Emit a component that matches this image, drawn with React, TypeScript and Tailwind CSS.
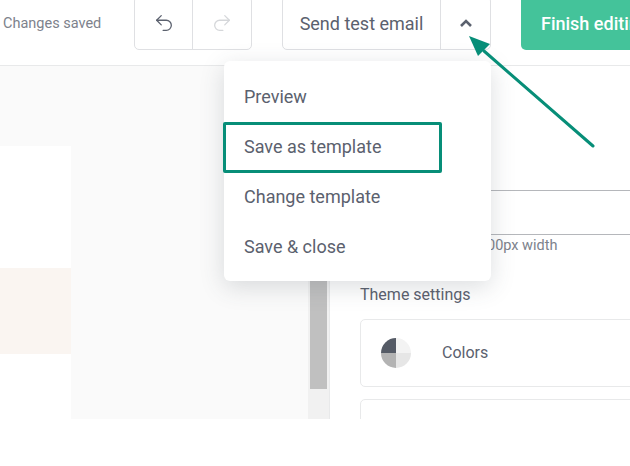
import { Undo2 } from "lucide-react";

const font = "font-['Roboto',sans-serif]";

function MenuItem({ label }: { label: string }) {
  return <div className="h-[50px] pl-5 flex items-center text-[18px] text-[#5b616e]">{label}</div>;
}

export default function App() {
  return (
    <div className={`relative w-[630px] h-[466px] overflow-hidden bg-white ${font}`}>
      {/* Top bar */}
      <header className="h-[66px] border-b border-[#e8e9ea] flex items-start whitespace-nowrap">
        <span className="w-[134px] shrink-0 pl-[3px] pt-[15px] text-[14.5px] leading-[18px] text-[#7d828c]">Changes saved</span>
        <div className="shrink-0 w-[118px] h-[54px] -mt-1 flex border border-[#dfe0e3] rounded-[5px]">
          <div className="w-[58px] flex items-center justify-center border-r border-[#dfe0e3]">
            <Undo2 size={22} strokeWidth={1.4} className="text-[#5b616e]" />
          </div>
          <div className="flex-1 flex items-center justify-center">
            <Undo2 size={22} strokeWidth={1.4} className="text-[#d5d7da] -scale-x-100" />
          </div>
        </div>
        <div className="shrink-0 ml-[30px] w-[209px] h-[54px] -mt-1 flex border border-[#dfe0e3] rounded-[5px]">
          <div className="w-[158px] flex items-center justify-center border-r border-[#dfe0e3] text-[18px] text-[#5b616e]">Send test email</div>
          <div className="flex-1 flex items-center justify-center">
            <svg width="14" height="10" viewBox="0 0 14 10" fill="none">
              <path d="M2 8l5-5 5 5" stroke="#5b616e" strokeWidth="2.6" />
            </svg>
          </div>
        </div>
        <div className="shrink-0 ml-[30px] w-[140px] h-[54px] -mt-1 pl-5 flex items-center bg-[#44c39a] rounded-[5px] text-[18px] font-medium text-white">Finish editing</div>
      </header>

      {/* Body */}
      <div className="h-[353px] flex">
        <div className="w-[330px] shrink-0 flex bg-[#fafafa] border-r border-[#e8e9ea]">
          <div className="w-[71px] mt-20 bg-white flex flex-col">
            <div className="h-[122px]" />
            <div className="h-[86px] bg-[#faf5f1]" />
          </div>
          <div className="flex-1" />
          <div className="w-[21px] bg-[#f1f1f1] px-[2px]">
            <div className="h-[323px] bg-[#c0c0c0]" />
          </div>
        </div>
        <div className="flex-1 pl-[30px] overflow-hidden">
          <div className="h-[125px] border-b border-[#b5b7bb] -mr-5" />
          <div className="h-[44px] border-b border-[#b5b7bb] -mr-5" />
          <p className="mt-[2px] text-[14.5px] leading-[18px] text-[#7d828c] whitespace-nowrap">When using a 600-700px width</p>
          <p className="mt-[30px] text-[16px] leading-[20px] text-[#5b616e]">Theme settings</p>
          <div className="mt-[14px] h-[68px] -mr-5 flex items-center border border-[#e8e9ea] rounded-[5px] pl-5">
            <svg width="30" height="30" viewBox="0 0 30 30" className="shrink-0">
              <path d="M15 15V0A15 15 0 0 0 0 15z" fill="#555b66" />
              <path d="M15 15V0A15 15 0 0 1 30 15z" fill="#f3f3f3" />
              <path d="M15 15H30A15 15 0 0 1 15 30z" fill="#e6e6e6" />
              <path d="M15 15V30A15 15 0 0 1 0 15z" fill="#b3b3b3" />
            </svg>
            <span className="ml-[31px] text-[16px] text-[#5b616e]">Colors</span>
          </div>
          <div className="mt-3 h-[68px] -mr-5 border border-[#e8e9ea] rounded-[5px]" />
        </div>
      </div>

      {/* Dropdown menu */}
      <div className="absolute left-[224px] top-[61px] w-[267px] h-[220px] py-[10px] bg-white rounded-[6px] shadow-[0_6px_24px_rgba(60,70,85,0.18)]">
        <MenuItem label="Preview" />
        <MenuItem label="Save as template" />
        <MenuItem label="Change template" />
        <MenuItem label="Save & close" />
      </div>

      {/* Annotations */}
      <div className="absolute left-[223px] top-[122px] w-[219px] h-[51px] border-[3px] border-[#078e78] rounded-[2px]" />
      <svg className="absolute left-0 top-0" width="630" height="466" fill="none">
        <path d="M593 146L484 51" stroke="#078e78" strokeWidth="3" strokeLinecap="round" />
        <path d="M469 36L490 44L478 56z" fill="#078e78" />
      </svg>
    </div>
  );
}
